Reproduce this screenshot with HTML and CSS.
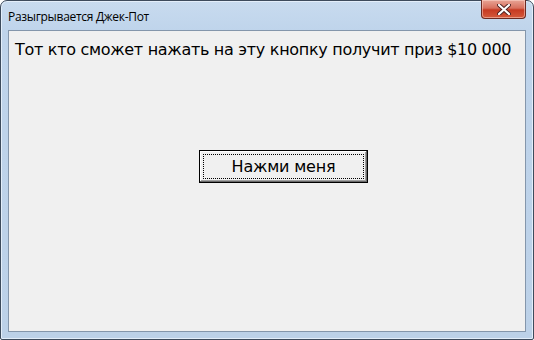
FILE: index.html
```html
<!DOCTYPE html>
<html>

<head>
    <meta charset="utf-8">
    <title>Разыгрывается Джек-Пот</title>
    <link rel="stylesheet" href="styles.css">
</head>

<body>
    <div class="window">
        <div class="titlebar">
            <span class="title">Разыгрывается Джек-Пот</span>
            <div class="close-btn">
                <svg width="14" height="11" viewBox="0 0 14 11">
                    <path d="M2 1 L12 10 M12 1 L2 10" stroke="#4a2020" stroke-width="4" stroke-linecap="round"/>
                    <path d="M2 1 L12 10 M12 1 L2 10" stroke="#fff" stroke-width="2.2" stroke-linecap="round"/>
                </svg>
            </div>
        </div>
        <div class="client">
            <p class="message">Тот кто сможет нажать на эту кнопку получит приз $10 000</p>
            <div class="button-row">
                <button class="prize-btn"><span class="focus">Нажми меня</span></button>
            </div>
        </div>
    </div>
</body>

</html>
```

FILE: styles.css
```css
* {
    margin: 0;
    padding: 0;
    box-sizing: border-box;
}

body {
    width: 534px;
    height: 340px;
    overflow: hidden;
    background: #fff;
}

.window {
    width: 534px;
    height: 340px;
    border: 1px solid #3d4b5c;
    border-radius: 7px 7px 2px 2px;
    background: linear-gradient(to bottom, #c8dbef 0%, #bfd4eb 30px, #bcd1e8 100%);
    display: flex;
    flex-direction: column;
    box-shadow: inset 0 0 0 1px #e3eefa;
}

.titlebar {
    height: 29px;
    display: flex;
    align-items: flex-start;
    justify-content: space-between;
    padding-left: 7px;
}

.title {
    font: 12px "Open Sans", "Noto Sans", sans-serif;
    letter-spacing: -0.3px;
    color: #000;
    margin-top: 7px;
}

.close-btn {
    width: 45px;
    height: 19px;
    margin-right: 7px;
    margin-top: -1px;
    border: 1px solid #6b2a22;
    border-top: none;
    border-radius: 0 0 4px 4px;
    background: linear-gradient(to bottom, #e8a596 0%, #d8705e 45%, #c63a22 55%, #d45a3c 100%);
    display: flex;
    align-items: center;
    justify-content: center;
    box-shadow: inset 0 0 0 1px rgba(255, 220, 210, 0.5);
}

.client {
    flex: 1;
    margin: 0 7px 7px 7px;
    border: 1px solid #8496ab;
    background: #f0f0f0;
    display: flex;
    flex-direction: column;
    padding: 9px 0 0 6px;
}

.message {
    font: 16px "DejaVu Sans", Verdana, sans-serif;
    letter-spacing: -0.3px;
    color: #000;
    white-space: nowrap;
}

.button-row {
    display: flex;
    padding-left: 184px;
    margin-top: 91px;
}

.prize-btn {
    width: 169px;
    height: 33px;
    background: #f0f0f0;
    border: 1px solid #000;
    box-shadow: inset -1px -1px 0 #696969, inset 1px 1px 0 #fff, inset -2px -2px 0 #a0a0a0;
    padding: 3px;
    font: 16px "DejaVu Sans", Verdana, sans-serif;
    letter-spacing: -0.2px;
    color: #000;
    display: flex;
}

.focus {
    flex: 1;
    border: 1px dotted #000;
    display: flex;
    align-items: center;
    justify-content: center;
}
```
